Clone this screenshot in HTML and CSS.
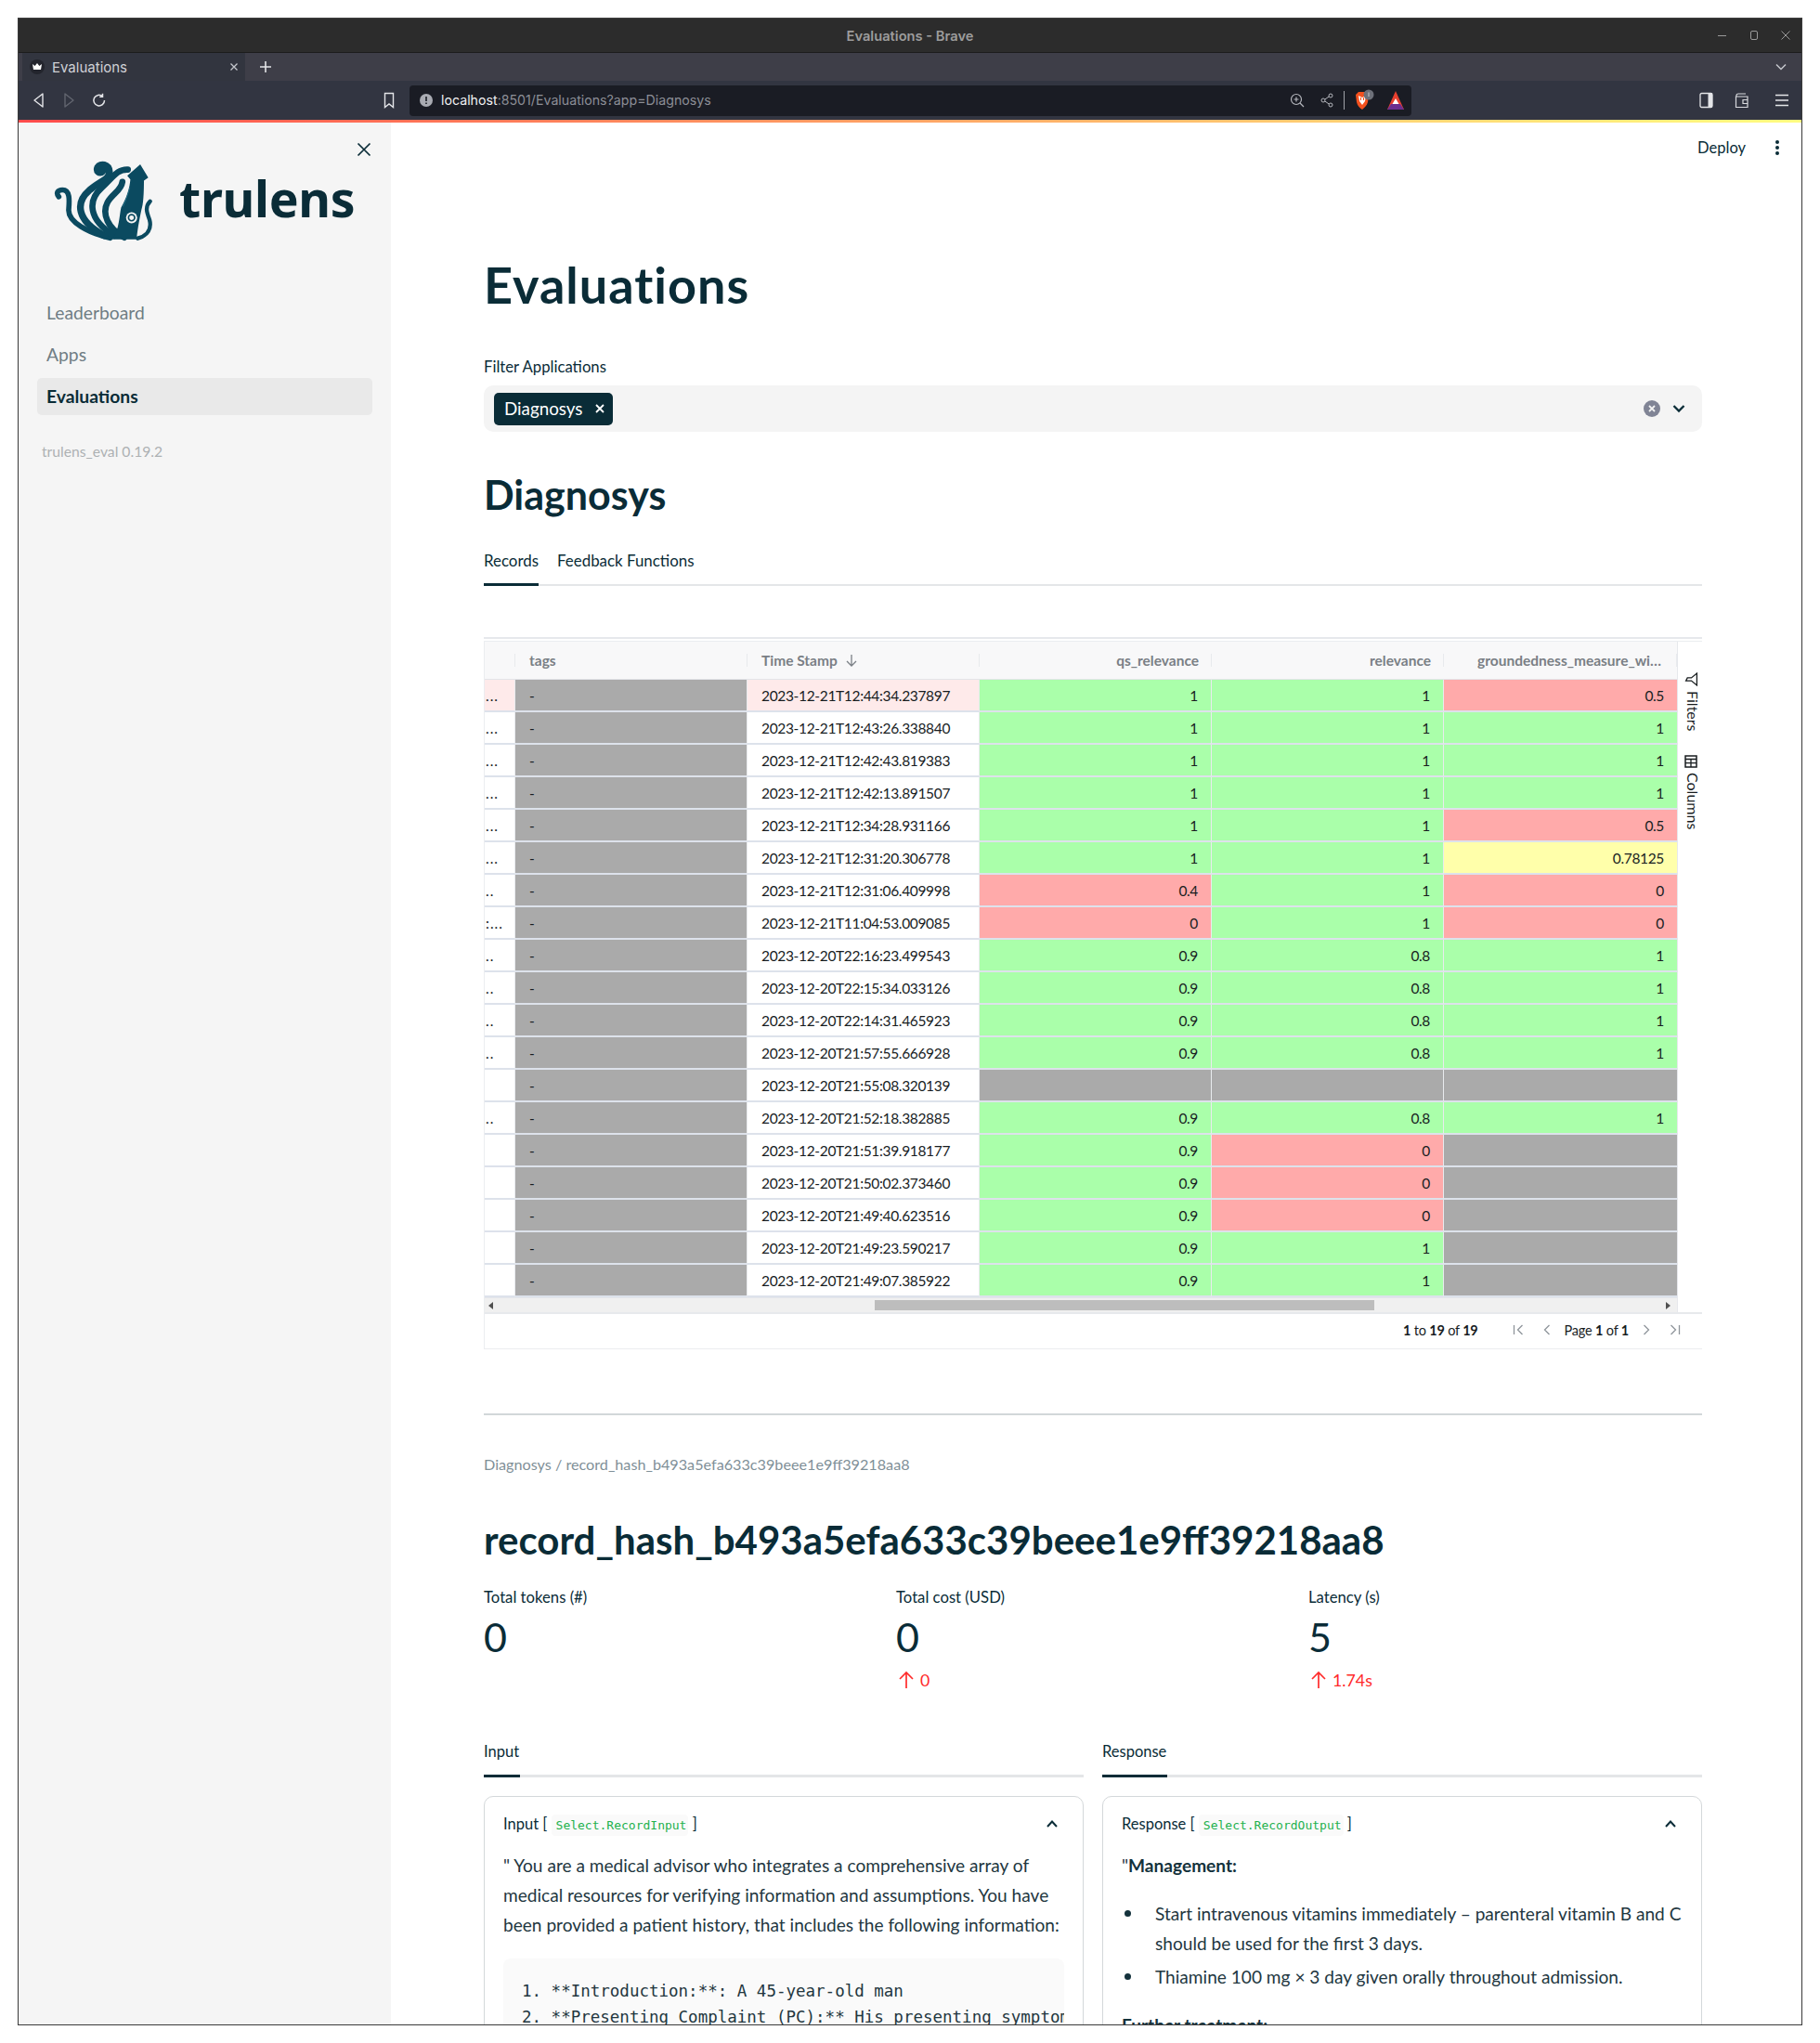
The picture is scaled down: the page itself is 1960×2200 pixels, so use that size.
FILE: index.html
```html
<!DOCTYPE html>
<html lang="en">
<head>
<meta charset="utf-8">
<title>Evaluations - Brave</title>
<link rel="stylesheet" href="styles.css">
</head>
<body>
<div class="window">
  <div class="titlebar">
    <span class="title-text">Evaluations - Brave</span>
    <div class="winctl">
      <svg width="14" height="14" viewBox="0 0 14 14"><path d="M2 7.500h9" stroke="#9a9a9a" fill="none"/></svg>
      <svg width="14" height="14" viewBox="0 0 14 14"><rect x="3.500" y="2.500" width="7" height="9" rx="1.500" stroke="#9a9a9a" fill="none"/></svg>
      <svg width="14" height="14" viewBox="0 0 14 14"><path d="M2.500 2.500l9 9M11.500 2.500l-9 9" stroke="#9a9a9a" fill="none"/></svg>
    </div>
  </div>
  <div class="tabbar">
    <div class="tab">
      <svg class="favicon" width="16" height="16" viewBox="0 0 16 16"><circle cx="8" cy="8" r="8" fill="#23252d"/><path d="M3 5l2.600 2L8 4l2.400 3L13 5l-1 6H4z" fill="#fff"/></svg>
      <span class="tab-title">Evaluations</span>
      <svg width="10" height="10" viewBox="0 0 10 10"><path d="M1.500 1.500l7 7M8.500 1.500l-7 7" stroke="#c4c6cc" stroke-width="1.300" fill="none"/></svg>
    </div>
    <svg class="newtab" width="14" height="14" viewBox="0 0 14 14"><path d="M7 1v12M1 7h12" stroke="#e4e5e8" stroke-width="1.600" fill="none"/></svg>
    <svg class="tabdown" width="14" height="14" viewBox="0 0 14 14"><path d="M2 4.500l5 5 5-5" stroke="#c4c6cc" stroke-width="1.500" fill="none"/></svg>
  </div>
  <div class="toolbar">
    <div class="navbtns">
      <svg width="14" height="18" viewBox="0 0 14 18"><path d="M11 2L2 9l9 7z" stroke="#e4e5e8" stroke-width="1.400" fill="none" stroke-linejoin="round"/></svg>
      <svg width="14" height="18" viewBox="0 0 14 18"><path d="M3 2l9 7-9 7z" stroke="#62656f" stroke-width="1.400" fill="none" stroke-linejoin="round"/></svg>
      <svg width="16" height="18" viewBox="0 0 16 18"><path d="M13.500 9a5.800 5.800 0 1 1-2-4.300M11.500 1.800v3.400H8.200" stroke="#e4e5e8" stroke-width="1.500" fill="none"/></svg>
    </div>
    <svg class="bookmark" width="12" height="18" viewBox="0 0 12 18"><path d="M1.500 1.500h9v15L6 13l-4.500 3.500z" stroke="#e4e5e8" stroke-width="1.400" fill="none"/></svg>
    <div class="urlbar">
      <svg width="14" height="14" viewBox="0 0 14 14"><circle cx="7" cy="7" r="7" fill="#a9abb2"/><path d="M7 3v5M7 9.500v1.500" stroke="#1a1c24" stroke-width="1.600"/></svg>
      <span class="url"><span class="url-host">localhost</span>:8501/Evaluations?app=Diagnosys</span>
      <div class="url-icons">
        <svg width="16" height="16" viewBox="0 0 16 16"><circle cx="7" cy="7" r="5.500" stroke="#b4b6bc" stroke-width="1.200" fill="none"/><path d="M11 11l4 4M7 4.500v5M4.500 7h5" stroke="#b4b6bc" stroke-width="1.200" fill="none"/></svg>
        <svg class="share" width="14" height="16" viewBox="0 0 14 16"><circle cx="11" cy="3" r="2" stroke="#b4b6bc" fill="none"/><circle cx="3" cy="8" r="2" stroke="#b4b6bc" fill="none"/><circle cx="11" cy="13" r="2" stroke="#b4b6bc" fill="none"/><path d="M9.200 4L4.800 7M4.800 9l4.400 3" stroke="#b4b6bc" fill="none"/></svg>
        <span class="url-sep"></span>
        <svg class="shield" width="22" height="24" viewBox="0 0 22 24"><path d="M1 6l3-3h8l3 3-1 8c-1 4-4 6-6 8-3-2-5-4-6-8z" fill="#f4511e"/><path d="M4 7l4 2 4-2-1 6-3 4-3-4z" fill="#fff"/><path d="M6 9h1v3H6zM9 9h1v3H9z" fill="#f4511e"/><circle cx="15" cy="6" r="5.500" fill="#6d7079"/><path d="M15 3.500V8" stroke="#c9cad0"/></svg>
        <svg width="18" height="20" viewBox="0 0 18 20"><path d="M9 0l9 20H0z" fill="#e8402f"/><path d="M0 20l4-6h10l4 6z" fill="#6b2f8f"/><path d="M9 8l3.500 6h-7z" fill="#fff"/></svg>
      </div>
    </div>
    <div class="tool-right">
      <svg width="16" height="18" viewBox="0 0 16 18"><rect x="1" y="1.500" width="13" height="15" rx="1.500" stroke="#e4e5e8" stroke-width="1.300" fill="none"/><rect x="9.500" y="1.500" width="4.500" height="15" fill="#e4e5e8"/></svg>
      <svg width="16" height="18" viewBox="0 0 16 18"><path d="M2 5V3.500C2 2.500 3 2 4 2h8M1.500 5h12.500v11.500H1.500zM9 8.500h5v4H9z" stroke="#d8d9dd" stroke-width="1.200" fill="none"/></svg>
      <svg class="menu" width="16" height="16" viewBox="0 0 16 16"><path d="M1 2.500h14M1 8h14M1 13.500h14" stroke="#e4e5e8" stroke-width="1.400" fill="none"/></svg>
    </div>
  </div>
  <div class="gradient"></div>

  <div class="app">
    <aside class="sidebar">
      <button class="side-close" aria-label="Close">
        <svg width="16" height="16" viewBox="0 0 16 16"><path d="M1.500 1.500l13 13M14.500 1.500l-13 13" stroke="#0a2c37" stroke-width="1.700" fill="none"/></svg>
      </button>
      <div class="brand">
        <svg class="squid" width="108" height="88" viewBox="50 60 325 265">
          <g fill="none" stroke="#0b4a60" stroke-linecap="round">
            <path d="M66 180C56 168 62 158 78 158C104 158 100 195 98 222C96 262 160 296 232 314" stroke-width="17"/>
            <path d="M208 98C198 108 186 98 192 84C200 70 228 74 230 98C232 124 196 130 164 160C120 198 122 258 214 306" stroke-width="22"/>
            <path d="M290 92C254 90 240 120 204 152C160 192 160 254 246 306" stroke-width="20"/>
            <path d="M272 132C268 160 240 170 224 198C204 236 226 284 278 312" stroke-width="20"/>
            <path d="M362 195C344 214 352 232 360 254C368 284 354 306 322 315" stroke-width="13"/>
          </g>
          <path d="M330 75L356 118L342 128C342 170 340 205 334 222C330 240 322 280 318 318L236 318C262 296 262 240 268 215C286 184 296 150 298 124L288 112Z" fill="#0b4a60"/>
          <path d="M296 150C290 175 282 195 274 212" stroke="#2f7d96" stroke-width="2" fill="none"/>
          <circle cx="302" cy="248" r="18" fill="#f5f5f5"/>
          <circle cx="302" cy="248" r="10" fill="none" stroke="#0b4a60" stroke-width="5"/>
        </svg>
        <span class="wordmark">trulens</span>
      </div>
      <nav class="side-nav">
        <a class="nav-link">Leaderboard</a>
        <a class="nav-link">Apps</a>
        <a class="nav-link active">Evaluations</a>
      </nav>
      <div class="version">trulens_eval 0.19.2</div>
    </aside>

    <main class="main">
      <div class="topbar">
        <span class="deploy">Deploy</span>
        <svg width="6" height="18" viewBox="0 0 6 18"><circle cx="3" cy="3" r="2" fill="#0a2c37"/><circle cx="3" cy="9" r="2" fill="#0a2c37"/><circle cx="3" cy="15" r="2" fill="#0a2c37"/></svg>
      </div>

      <h1 class="h1">Evaluations</h1>
      <div class="field-label">Filter Applications</div>
      <div class="select">
        <span class="chip">Diagnosys
          <svg width="10" height="10" viewBox="0 0 10 10"><path d="M1 1l8 8M9 1l-8 8" stroke="#fff" stroke-width="1.800" fill="none"/></svg>
        </span>
        <span class="select-icons">
          <svg width="18" height="18" viewBox="0 0 18 18"><circle cx="9" cy="9" r="9" fill="#808495"/><path d="M6 6l6 6M12 6l-6 6" stroke="#f3f3f3" stroke-width="1.800"/></svg>
          <svg width="14" height="10" viewBox="0 0 14 10"><path d="M1.500 2l5.500 5.500L12.500 2" stroke="#0a2c37" stroke-width="2.300" fill="none"/></svg>
        </span>
      </div>
      <h2 class="h2">Diagnosys</h2>
      <div class="tabs">
        <span class="tablink active">Records</span>
        <span class="tablink">Feedback Functions</span>
      </div>
      <div class="grid-topline"></div>

      <section class="grid">
        <div class="grid-body">
          <div class="grid-cols">
            <div class="g-row g-head">
              <div class="c c0"></div>
              <div class="c c1">tags</div>
              <div class="c c2">Time Stamp
                <svg width="14" height="14" viewBox="0 0 14 14"><path d="M7 1v12M2 8l5 5 5-5" stroke="#7a7f85" stroke-width="1.300" fill="none"/></svg>
              </div>
              <div class="c c3">qs_relevance</div>
              <div class="c c3">relevance</div>
              <div class="c c3 c-last">groundedness_measure_wi…</div>
            </div>
            <div class="g-row hi"><div class="c c0">...</div><div class="c c1 n">-</div><div class="c c2">2023-12-21T12:44:34.237897</div><div class="c c3 g">1</div><div class="c c3 g">1</div><div class="c c3 c-last r">0.5</div></div>
            <div class="g-row"><div class="c c0">...</div><div class="c c1 n">-</div><div class="c c2">2023-12-21T12:43:26.338840</div><div class="c c3 g">1</div><div class="c c3 g">1</div><div class="c c3 c-last g">1</div></div>
            <div class="g-row"><div class="c c0">...</div><div class="c c1 n">-</div><div class="c c2">2023-12-21T12:42:43.819383</div><div class="c c3 g">1</div><div class="c c3 g">1</div><div class="c c3 c-last g">1</div></div>
            <div class="g-row"><div class="c c0">...</div><div class="c c1 n">-</div><div class="c c2">2023-12-21T12:42:13.891507</div><div class="c c3 g">1</div><div class="c c3 g">1</div><div class="c c3 c-last g">1</div></div>
            <div class="g-row"><div class="c c0">...</div><div class="c c1 n">-</div><div class="c c2">2023-12-21T12:34:28.931166</div><div class="c c3 g">1</div><div class="c c3 g">1</div><div class="c c3 c-last r">0.5</div></div>
            <div class="g-row"><div class="c c0">...</div><div class="c c1 n">-</div><div class="c c2">2023-12-21T12:31:20.306778</div><div class="c c3 g">1</div><div class="c c3 g">1</div><div class="c c3 c-last y">0.78125</div></div>
            <div class="g-row"><div class="c c0">..</div><div class="c c1 n">-</div><div class="c c2">2023-12-21T12:31:06.409998</div><div class="c c3 r">0.4</div><div class="c c3 g">1</div><div class="c c3 c-last r">0</div></div>
            <div class="g-row"><div class="c c0">:...</div><div class="c c1 n">-</div><div class="c c2">2023-12-21T11:04:53.009085</div><div class="c c3 r">0</div><div class="c c3 g">1</div><div class="c c3 c-last r">0</div></div>
            <div class="g-row"><div class="c c0">..</div><div class="c c1 n">-</div><div class="c c2">2023-12-20T22:16:23.499543</div><div class="c c3 g">0.9</div><div class="c c3 g">0.8</div><div class="c c3 c-last g">1</div></div>
            <div class="g-row"><div class="c c0">..</div><div class="c c1 n">-</div><div class="c c2">2023-12-20T22:15:34.033126</div><div class="c c3 g">0.9</div><div class="c c3 g">0.8</div><div class="c c3 c-last g">1</div></div>
            <div class="g-row"><div class="c c0">..</div><div class="c c1 n">-</div><div class="c c2">2023-12-20T22:14:31.465923</div><div class="c c3 g">0.9</div><div class="c c3 g">0.8</div><div class="c c3 c-last g">1</div></div>
            <div class="g-row"><div class="c c0">..</div><div class="c c1 n">-</div><div class="c c2">2023-12-20T21:57:55.666928</div><div class="c c3 g">0.9</div><div class="c c3 g">0.8</div><div class="c c3 c-last g">1</div></div>
            <div class="g-row"><div class="c c0"></div><div class="c c1 n">-</div><div class="c c2">2023-12-20T21:55:08.320139</div><div class="c c3 n"></div><div class="c c3 n"></div><div class="c c3 c-last n"></div></div>
            <div class="g-row"><div class="c c0">..</div><div class="c c1 n">-</div><div class="c c2">2023-12-20T21:52:18.382885</div><div class="c c3 g">0.9</div><div class="c c3 g">0.8</div><div class="c c3 c-last g">1</div></div>
            <div class="g-row"><div class="c c0"></div><div class="c c1 n">-</div><div class="c c2">2023-12-20T21:51:39.918177</div><div class="c c3 g">0.9</div><div class="c c3 r">0</div><div class="c c3 c-last n"></div></div>
            <div class="g-row"><div class="c c0"></div><div class="c c1 n">-</div><div class="c c2">2023-12-20T21:50:02.373460</div><div class="c c3 g">0.9</div><div class="c c3 r">0</div><div class="c c3 c-last n"></div></div>
            <div class="g-row"><div class="c c0"></div><div class="c c1 n">-</div><div class="c c2">2023-12-20T21:49:40.623516</div><div class="c c3 g">0.9</div><div class="c c3 r">0</div><div class="c c3 c-last n"></div></div>
            <div class="g-row"><div class="c c0"></div><div class="c c1 n">-</div><div class="c c2">2023-12-20T21:49:23.590217</div><div class="c c3 g">0.9</div><div class="c c3 g">1</div><div class="c c3 c-last n"></div></div>
            <div class="g-row"><div class="c c0"></div><div class="c c1 n">-</div><div class="c c2">2023-12-20T21:49:07.385922</div><div class="c c3 g">0.9</div><div class="c c3 g">1</div><div class="c c3 c-last n"></div></div>
            <div class="hscroll">
              <svg width="6" height="8" viewBox="0 0 6 8"><path d="M5 0v8L0 4z" fill="#505050"/></svg>
              <div class="hscroll-track"><div class="hscroll-thumb"></div></div>
              <svg width="6" height="8" viewBox="0 0 6 8"><path d="M0 0v8l5-4z" fill="#505050"/></svg>
            </div>
          </div>
          <div class="grid-side">
            <div class="side-btn">
              <svg width="15" height="15" viewBox="0 0 14 14"><path d="M1 1.500h12L8.500 7v5.500L5.500 11V7z" stroke="#181d1f" stroke-width="1.200" fill="none" transform="rotate(90 7 7)"/></svg>
              <span class="side-label">Filters</span>
            </div>
            <div class="side-btn">
              <svg width="14" height="14" viewBox="0 0 14 14"><rect x="1" y="1" width="12" height="12" fill="none" stroke="#181d1f" stroke-width="1.500"/><path d="M1 4.500h12M7 4.500v8.500M1 8.700h12" stroke="#181d1f" stroke-width="1.300"/></svg>
              <span class="side-label">Columns</span>
            </div>
          </div>
        </div>
        <div class="grid-foot">
          <span class="count"><b>1</b> to <b>19</b> of <b>19</b></span>
          <span class="pager">
            <svg width="12" height="12" viewBox="0 0 12 12"><path d="M1.500 1v10M10.500 1l-5 5 5 5" stroke="#8f959b" stroke-width="1.300" fill="none"/></svg>
            <svg width="9" height="12" viewBox="0 0 9 12"><path d="M7.500 1l-5 5 5 5" stroke="#8f959b" stroke-width="1.300" fill="none"/></svg>
            <span class="pagetext">Page <b>1</b> of <b>1</b></span>
            <svg width="9" height="12" viewBox="0 0 9 12"><path d="M1.500 1l5 5-5 5" stroke="#8f959b" stroke-width="1.300" fill="none"/></svg>
            <svg width="12" height="12" viewBox="0 0 12 12"><path d="M10.500 1v10M1.500 1l5 5-5 5" stroke="#8f959b" stroke-width="1.300" fill="none"/></svg>
          </span>
        </div>
      </section>

      <hr class="divider">
      <div class="crumb">Diagnosys / record_hash_b493a5efa633c39beee1e9ff39218aa8</div>
      <h2 class="h2b">record_hash_b493a5efa633c39beee1e9ff39218aa8</h2>

      <div class="metrics">
        <div class="metric"><div class="m-label">Total tokens (#)</div><div class="m-value">0</div></div>
        <div class="metric"><div class="m-label">Total cost (USD)</div><div class="m-value">0</div>
          <div class="m-delta"><svg width="18" height="20" viewBox="0 0 18 20"><path d="M9 19V2M2 9l7-7 7 7" stroke="#ff2b2b" stroke-width="1.700" fill="none"/></svg>0</div></div>
        <div class="metric"><div class="m-label">Latency (s)</div><div class="m-value">5</div>
          <div class="m-delta"><svg width="18" height="20" viewBox="0 0 18 20"><path d="M9 19V2M2 9l7-7 7 7" stroke="#ff2b2b" stroke-width="1.700" fill="none"/></svg>1.74s</div></div>
      </div>

      <div class="panes">
        <div class="pane">
          <div class="pane-tabs"><span class="pane-tab w-input">Input</span></div>
          <div class="card">
            <div class="card-head">
              <span class="card-title">Input [ <code class="sel">Select.RecordInput</code> ]</span>
              <svg width="14" height="10" viewBox="0 0 14 10"><path d="M2 8l5-5.500L12 8" stroke="#0a2c37" stroke-width="2" fill="none"/></svg>
            </div>
            <p class="para">" You are a medical advisor who integrates a comprehensive array of medical resources for verifying information and assumptions. You have been provided a patient history, that includes the following information:</p>
            <pre class="codeblock">1. **Introduction:**: A 45-year-old man
2. **Presenting Complaint (PC):** His presenting symptoms are</pre>
          </div>
        </div>
        <div class="pane">
          <div class="pane-tabs"><span class="pane-tab w-resp">Response</span></div>
          <div class="card">
            <div class="card-head">
              <span class="card-title">Response [ <code class="sel">Select.RecordOutput</code> ]</span>
              <svg width="14" height="10" viewBox="0 0 14 10"><path d="M2 8l5-5.500L12 8" stroke="#0a2c37" stroke-width="2" fill="none"/></svg>
            </div>
            <p class="para">"<b>Management:</b></p>
            <ul class="list">
              <li>Start intravenous vitamins immediately – parenteral vitamin B and C should be used for the first 3 days.</li>
              <li>Thiamine 100 mg × 3 day given orally throughout admission.</li>
            </ul>
            <p class="para para-b"><b>Further treatment:</b></p>
          </div>
        </div>
      </div>
    </main>
  </div>
</div>
</body>
</html>
```

FILE: styles.css
```css
* { box-sizing: border-box; }
html, body { margin: 0; padding: 0; background: #fff; }
body { font-family: "Lato", "Noto Sans", sans-serif; color: #0a2c37; }
svg { display: block; flex: none; }

.window { margin: 19px 19px 0 19px; width: 1922px; height: 2162px; border: 1px solid #3a3a3a; border-top-color: #3f3f3f; display: flex; flex-direction: column; overflow: hidden; }

.titlebar { height: 37px; flex: none; background: #2c2c2c; border-bottom: 1px solid #1c1c1c; display: flex; align-items: center; justify-content: center; padding-top: 1px; }
.title-text { font: 600 14.700px "Inter", sans-serif; color: #9c9c9c; margin-left: 0; }
.winctl { position: absolute; right: 30px; top: 31px; display: flex; gap: 20px; }

.tabbar { height: 30px; flex: none; background: #3e3e48; display: flex; align-items: center; padding-left: 4px; }
.tab { width: 240px; height: 30px; background: #32353f; display: flex; align-items: center; padding: 0 7px 0 8px; gap: 8px; }
.tab-title { font: 400 15px "Inter", sans-serif; color: #d0d1d6; flex: 1; }
.newtab { margin-left: 15px; }
.tabdown { margin-left: auto; margin-right: 15px; }

.toolbar { height: 42px; flex: none; background: #323541; display: flex; align-items: center; }
.navbtns { display: flex; gap: 18px; align-items: center; padding-left: 15px; }
.bookmark { margin-left: 298px; }
.urlbar { width: 1079px; height: 33px; margin-left: 16px; background: #1a1c24; border-radius: 4px; display: flex; align-items: center; padding-left: 11px; gap: 9px; }
.url { font: 400 14.200px "Inter", sans-serif; color: #8c8e96; margin-top: -2px; }
.url-host { color: #f0f0f2; }
.url-icons { margin-left: auto; display: flex; align-items: center; gap: 13px; padding-right: 8px; }
.share { margin-left: 4px; }
.url-sep { width: 1px; height: 20px; background: #a0a2a8; margin: 0 -2px; }
.tool-right { margin-left: auto; display: flex; align-items: center; gap: 22px; padding-right: 13px; }
.menu { margin-left: 5px; }

.gradient { height: 3px; flex: none; background: linear-gradient(90deg, #ff4b4b, #fffd80); }

.app { flex: 1; display: flex; min-height: 0; }

.sidebar { width: 401px; flex: none; background: #f5f5f5; position: relative; padding: 40px 0 0 0; }
.side-close { position: absolute; right: 21px; top: 21px; padding: 0; border: 0; background: none; }
.brand { display: flex; align-items: center; padding-left: 38px; height: 88px; }
.wordmark { font: 700 53.500px "Noto Sans", sans-serif; color: #0a2c37; margin-left: 27px; letter-spacing: -0.3px; margin-top: -6px; }
.side-nav { margin: 57px 20px 0 20px; display: flex; flex-direction: column; gap: 5px; }
.nav-link { height: 40px; line-height: 40px; padding-left: 10px; border-radius: 5px; font-size: 19.300px; color: #6f7d84; }
.nav-link.active { background: #e9e9e9; color: #0a2c37; font-weight: 700; }
.version { margin: 30px 0 0 25px; font-size: 15.700px; color: #adb1b3; }

.main { flex: 1; min-width: 0; padding-left: 100px; position: relative; }
.topbar { position: absolute; right: 23px; top: 17px; display: flex; align-items: center; gap: 31px; }
.deploy { font-size: 16.500px; }

.h1 { margin: 140px 0 0; height: 70px; line-height: 70px; font-size: 54px; font-weight: 700; letter-spacing: 1px; }
.field-label { margin-top: 43px; height: 20px; line-height: 20px; font-size: 16.700px; }
.select { margin-top: 10px; width: 1312px; height: 50px; background: #f4f4f4; border-radius: 10px; display: flex; align-items: center; padding: 0 18px 0 11px; }
.chip { height: 35px; width: 128px; background: #0a2c37; color: #fff; border-radius: 5px; display: flex; align-items: center; justify-content: space-between; padding: 0 9px 1px 11px; font-size: 18.800px; }
.select-icons { margin-left: auto; display: flex; align-items: center; gap: 13px; padding-right: 0; }
.h2 { margin: 38px 0 0; height: 60px; line-height: 60px; font-size: 43px; font-weight: 700; }

.tabs { margin-top: 17px; width: 1312px; height: 51px; border-bottom: 2px solid #e4e6e8; display: flex; gap: 20px; }
.tablink { height: 51px; line-height: 48px; font-size: 16.900px; }
.tablink.active { border-bottom: 3px solid #0a2c37; }

.grid-topline { width: 1312px; height: 2px; background: #e6e8ec; margin-top: 55px; }

.grid { margin-top: 2px; width: 1312px; border: 1px solid #ebedf0; border-right: 0; }
.grid-body { display: flex; }
.grid-cols { width: 1285px; flex: none; border-right: 1px solid #e6e8ec; }
.grid-side { flex: 1; border-left: 0; padding: 33px 0 0 7px; display: flex; flex-direction: column; gap: 26px; }
.side-btn { display: flex; flex-direction: column; align-items: flex-start; gap: 5px; }
.side-label { writing-mode: vertical-rl; font-size: 16px; color: #181d1f; }

.g-row { display: flex; height: 35px; }
.g-head { height: 41px; background: #f8f8f9; border-bottom: 1px solid #e3e5e9; }
.g-head .c { color: #7a7f85; font-size: 15.500px; letter-spacing: 0; font-weight: 700; border: 0; position: relative; gap: 8px; }
.g-head .c::after { content: ""; position: absolute; right: 0; top: 13px; height: 14px; width: 1px; background: #e8eaed; }
.c { display: flex; align-items: center; height: 35px; padding: 1px 14px 0 15px; border-bottom: 2px solid #dde2eb; border-right: 1px solid #e9ebee; font-size: 15.500px; letter-spacing: -0.34px; color: #181d1f; white-space: nowrap; overflow: hidden; }
.g-head .c { height: 40px; padding-top: 0; padding-bottom: 1px; }
.c0 { width: 33px; padding: 0 0 0 1px; color: #181d1f; letter-spacing: 1px; }
.c1, .c2 { width: 250px; }
.c3 { width: 250px; justify-content: flex-end; }
.c-last { width: 251px; border-right: 0; }
.g-head .c-last { padding-right: 17px; }
.hi .c0, .hi .c2 { background: #feeaea; }
.g { background: #aaffaa; }
.r { background: #ffaaaa; }
.y { background: #ffffaa; }
.n { background: #aaaaaa; }

.hscroll { height: 16px; background: #f0f0f0; display: flex; align-items: center; padding: 0 6px 0 4px; gap: 0; border-top: 1px solid #e4e6ea; }
.hscroll-track { flex: 1; padding-left: 410px; }
.hscroll-thumb { width: 538px; height: 11px; background: #bdbdbd; }

.grid-foot { height: 39px; border-top: 2px solid #e7e9ec; display: flex; align-items: center; justify-content: flex-end; padding: 0 23px 3px 0; font-size: 14.500px; letter-spacing: -0.2px; color: #181d1f; }
.grid-foot b { font-weight: 700; }
.pager { display: flex; align-items: center; gap: 20px; margin-left: 37px; }
.pagetext { margin: 0 -5px; }

.divider { margin: 69px 0 0; width: 1312px; height: 2px; border: 0; background: #d2d7d9; }
.crumb { margin-top: 43px; height: 20px; line-height: 20px; font-size: 16.200px; color: #7f9098; }
.h2b { margin: 41px 0 0; height: 60px; line-height: 60px; font-size: 42px; font-weight: 700; }

.metrics { margin-top: 22px; display: flex; width: 1312px; }
.metric { width: 444px; flex: none; }
.m-label { height: 20px; line-height: 20px; font-size: 16.700px; }
.m-value { margin-top: 10px; height: 46px; line-height: 46px; font-size: 43px; font-weight: 400; }
.m-delta { margin-top: 12px; height: 22px; display: flex; align-items: center; gap: 6px; color: #ff2b2b; font-size: 17.800px; padding-left: 2px; }

.panes { margin-top: 44px; display: flex; gap: 20px; width: 1312px; }
.pane { width: 646px; flex: none; }
.pane-tabs { height: 50px; border-bottom: 3px solid #e4e6e8; }
.pane-tab { display: block; height: 50px; line-height: 44px; border-bottom: 3px solid #0a2c37; font-size: 16.500px; }
.w-input { width: 39px; }
.w-resp { width: 70px; }

.card { margin-top: 20px; height: 500px; border: 1.500px solid #d4d8da; border-radius: 10px; padding: 0 20px; }
.card-head { height: 46px; margin-top: 6px; display: flex; align-items: center; justify-content: space-between; padding-right: 6px; }
.card-title { font-size: 16.500px; }
.sel { font: 13px "DejaVu Sans Mono", monospace; color: #23b14d; background: #fafafa; padding: 4px 2px 4px 5px; border-radius: 4px; }
.para { margin: 6px 0 0; font-size: 19.100px; line-height: 32px; color: #23373f; }
.para b { color: #14323c; }
.codeblock { margin: 20px 0 0; height: 110px; background: #fafafa; border-radius: 8px; padding: 21px 0 20px 20px; overflow: hidden; font: 17.500px/28px "DejaVu Sans Mono", monospace; color: #23373f; }
.list { margin: 20px 0 0; padding-left: 36px; font-size: 19.100px; line-height: 32px; color: #23373f; list-style: none; }
.list li { margin-bottom: 4px; position: relative; }
.list li::before { content: ""; position: absolute; left: -33px; top: 12px; width: 7px; height: 7px; border-radius: 50%; background: #14323c; }
.para-b { margin-top: 20px; }
```
